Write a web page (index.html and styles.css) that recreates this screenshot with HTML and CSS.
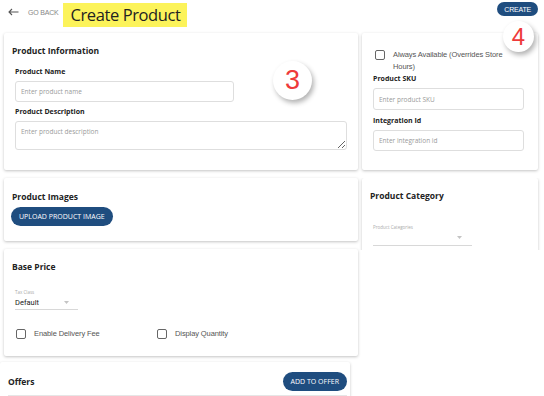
FILE: index.html
```html
<!DOCTYPE html>
<html>
<head>
  <title>Create Product</title>
  <link rel="stylesheet" href="styles.css">
</head>
<body>
  <div class="topbar">
    <div class="back">
      <svg class="back-arrow" width="11" height="8" viewBox="0 0 11 8">
        <path d="M10.5 4H1M4 1L1 4l3 3" fill="none" stroke="#555" stroke-width="1.1"/>
      </svg>
      <span class="back-text">GO BACK</span>
    </div>
    <h1 class="page-title">Create Product</h1>
    <div class="spacer"></div>
    <button class="btn btn-create">CREATE</button>
  </div>

  <div class="main">
    <div class="col-left">
      <div class="card card-info">
        <h2 class="card-title">Product Information</h2>
        <div class="field">
          <label class="field-label">Product Name</label>
          <input class="text-input input-name" type="text" placeholder="Enter product name">
        </div>
        <div class="field">
          <label class="field-label">Product Description</label>
          <textarea class="text-input input-desc" placeholder="Enter product description"></textarea>
        </div>
      </div>

      <div class="card card-images">
        <h2 class="card-title">Product Images</h2>
        <button class="btn btn-upload">UPLOAD PRODUCT IMAGE</button>
      </div>

      <div class="card card-price">
        <h2 class="card-title">Base Price</h2>
        <div class="select select-tax">
          <div class="select-label">Tax Class</div>
          <div class="select-value">
            <span>Default</span>
            <svg class="caret" width="5" height="3" viewBox="0 0 5 3"><path d="M0 0h5L2.5 3z" fill="#c4c4c4"/></svg>
          </div>
        </div>
        <div class="check-row">
          <label class="check"><span class="box"></span><span class="check-text">Enable Delivery Fee</span></label>
          <label class="check"><span class="box"></span><span class="check-text">Display Quantity</span></label>
        </div>
      </div>

      <div class="card card-offers">
        <div class="offers-head">
          <h2 class="card-title">Offers</h2>
          <button class="btn btn-offer">ADD TO OFFER</button>
        </div>
        <div class="divider"></div>
      </div>
    </div>

    <div class="col-right">
      <div class="card card-sku">
        <label class="check check-always">
          <span class="box"></span>
          <span class="check-text">Always Available (Overrides Store Hours)</span>
        </label>
        <div class="field">
          <label class="field-label">Product SKU</label>
          <input class="text-input input-sku" type="text" placeholder="Enter product SKU">
        </div>
        <div class="field">
          <label class="field-label">Integration Id</label>
          <input class="text-input input-int" type="text" placeholder="Enter integration id">
        </div>
      </div>

      <div class="clip">
        <div class="card card-category">
          <h2 class="card-title">Product Category</h2>
          <div class="select select-cat">
            <div class="select-label">Product Categories</div>
            <div class="select-value">
              <span></span>
              <svg class="caret" width="5" height="3" viewBox="0 0 5 3"><path d="M0 0h5L2.5 3z" fill="#c4c4c4"/></svg>
            </div>
          </div>
        </div>
      </div>
    </div>
  </div>

  <div class="badge badge-3">3</div>
  <div class="badge badge-4">4</div>
</body>
</html>
```

FILE: styles.css
```css
body {
  margin: 0;
  width: 544px;
  height: 396px;
  overflow: hidden;
  position: relative;
  font-family: "Open Sans", sans-serif;
  background-color: #fff;
  color: #222;
}

.topbar {
  display: flex;
  align-items: flex-start;
  height: 33px;
  padding: 0 6px 0 8px;
  box-sizing: border-box;
}

.back {
  display: flex;
  align-items: center;
  height: 12px;
  margin-top: 6px;
}

.back-text {
  margin-left: 9px;
  font-family: "Liberation Sans", Arial, sans-serif;
  font-size: 7px;
  color: #888;
  letter-spacing: -0.2px;
}

.page-title {
  margin: 3px 0 0 4px;
  height: 24px;
  padding: 0 6px 0 8px;
  background-color: #fcf35a;
  font-size: 16.5px;
  font-weight: 400;
  line-height: 24px;
  letter-spacing: -0.4px;
  color: #222;
}

.spacer {
  flex: 1;
}

.btn {
  border: none;
  color: #fff;
  background-color: #1f4d7f;
  font-family: "Open Sans", sans-serif;
  cursor: pointer;
  padding: 0;
}

.btn-create {
  margin-top: 2px;
  height: 14px;
  padding: 0 7px;
  border-radius: 7px;
  font-family: "Liberation Sans", Arial, sans-serif;
  font-size: 7px;
  letter-spacing: -0.2px;
}

.main {
  display: flex;
  gap: 4px;
  padding-left: 4px;
}

.col-left {
  width: 354px;
  display: flex;
  flex-direction: column;
  gap: 8px;
}

.col-right {
  width: 176px;
  display: flex;
  flex-direction: column;
  gap: 8px;
}

.card {
  background-color: #fff;
  box-shadow: 0 1px 3px rgba(0, 0, 0, 0.24);
  border-radius: 2px;
  box-sizing: border-box;
  padding: 12px 8px;
}

.card-title {
  margin: 0;
  font-size: 8.5px;
  font-weight: 700;
  line-height: 11px;
  color: #222;
}

.field {
  display: flex;
  flex-direction: column;
  padding-left: 3px;
}

.field-label {
  font-size: 7px;
  font-weight: 700;
  line-height: 10px;
  color: #222;
}

.text-input {
  margin-top: 4px;
  border: 1px solid #dedede;
  border-radius: 3px;
  box-sizing: border-box;
  padding: 0 5px;
  font-family: "Open Sans", sans-serif;
  font-size: 6.5px;
  color: #333;
  background-color: #fff;
  outline: none;
}

.text-input::placeholder {
  color: #9a9a9a;
}

/* product information */
.card-info {
  height: 137px;
}

.card-info .field:first-of-type {
  margin-top: 11px;
}

.card-info .field + .field {
  margin-top: 5px;
}

.input-name {
  width: 219px;
  height: 21px;
}

.input-desc {
  width: 332px;
  height: 29px;
  padding-top: 5px;
  resize: vertical;
}

/* product images */
.card-images {
  height: 63px;
  padding-top: 13px;
  padding-left: 7px;
}

.card-images .card-title {
  margin-left: 1px;
}

.btn-upload {
  display: block;
  margin-top: 5px;
  height: 19px;
  padding: 0 8px;
  border-radius: 10px;
  font-size: 7px;
}

/* base price */
.card-price {
  height: 107px;
  padding-top: 12px;
}

.select {
  margin-left: 3px;
  border-bottom: 1px solid #d8d8d8;
  box-sizing: border-box;
}

.select-label {
  font-size: 4.5px;
  line-height: 6px;
  color: #aaa;
}

.select-value {
  display: flex;
  align-items: center;
  justify-content: space-between;
  padding-right: 9px;
  font-family: Roboto, sans-serif;
  font-size: 7.5px;
  line-height: 10px;
  color: #222;
  height: 13px;
}

.select-tax {
  width: 63px;
  margin-top: 17px;
}

.select-tax .select-value {
  margin-top: 1px;
}

.check-row {
  display: flex;
  margin-top: 19px;
  padding-left: 4px;
}

.check {
  display: flex;
  align-items: flex-start;
}

.check-row .check:first-child {
  width: 141px;
}

.box {
  width: 10px;
  height: 10px;
  border: 1.4px solid #666;
  border-radius: 2px;
  box-sizing: border-box;
  flex-shrink: 0;
}

.check-text {
  margin-left: 8px;
  font-family: "Liberation Sans", Arial, sans-serif;
  font-size: 7.5px;
  line-height: 10px;
  color: #555;
  letter-spacing: -0.1px;
}

/* offers */
.card-offers {
  width: 350px;
  height: 50px;
  margin-left: -4px;
  margin-top: -2px;
  padding: 10px 3px 0 8px;
}

.offers-head {
  display: flex;
  align-items: center;
  justify-content: space-between;
  height: 19px;
}

.divider {
  margin-top: 4px;
  height: 1px;
  background-color: #e6e6e6;
}

.btn-offer {
  height: 19px;
  padding: 0 8px;
  border-radius: 10px;
  font-size: 7px;
}

/* right column */
.card-sku {
  height: 137px;
  padding: 16px 11px 12px 11px;
}

.check-always {
  padding-left: 2px;
}

.check-always .box {
  margin-top: 1px;
}

.check-always .check-text {
  width: 124px;
  line-height: 12px;
}

.card-sku .field {
  padding-left: 0;
}

.card-sku .field:first-of-type {
  margin-top: 1px;
}

.card-sku .field + .field {
  margin-top: 6px;
}

.input-sku {
  width: 151px;
  height: 22px;
}

.input-int {
  width: 151px;
  height: 21px;
}

.clip {
  height: 72px;
  overflow: hidden;
  margin: 0 -4px;
  padding: 0 4px;
}

.card-category {
  height: 110px;
  padding-top: 12px;
}

.select-cat {
  width: 99px;
  margin-top: 23px;
}

.select-cat .select-value {
  padding-right: 10px;
  height: 15px;
}

.badge {
  position: absolute;
  border-radius: 50%;
  background-color: #fff;
  box-shadow: 2px 3px 5px rgba(0, 0, 0, 0.3);
  display: flex;
  align-items: center;
  justify-content: center;
  font-family: "Liberation Sans", Arial, sans-serif;
  color: #ee3a3a;
}

.badge-3 {
  left: 273px;
  top: 61px;
  width: 39px;
  height: 39px;
  font-size: 27px;
}

.badge-4 {
  left: 503px;
  top: 21px;
  width: 31px;
  height: 31px;
  font-size: 24px;
}
```
